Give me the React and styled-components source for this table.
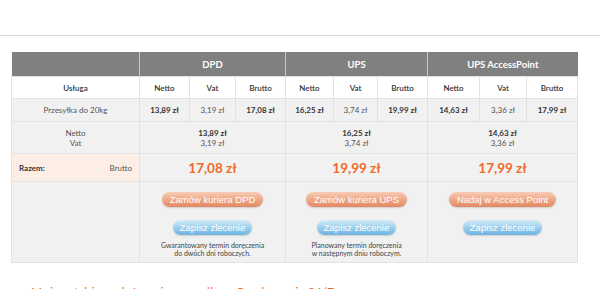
import React from "react";
import styled, { createGlobalStyle } from "styled-components";

const Global = createGlobalStyle`
  html, body { margin: 0; padding: 0; background: #fff; }
  body { font-family: Lato, "Open Sans", sans-serif; color: #333; overflow: hidden; }
`;

const Page = styled.div`
  width: 600px;
  height: 289px;
  overflow: hidden;
  padding-top: 35px;
  box-sizing: border-box;
`;

const Rule = styled.div`
  height: 1px;
  background: #d6d6d6;
  margin-bottom: 16px;
`;

const Table = styled.table`
  margin-left: 11px;
  width: 566px;
  border-collapse: collapse;
  table-layout: fixed;
  font-size: 8px;
`;

const HeadCell = styled.th`
  background: #808080;
  color: #fff;
  font-weight: 700;
  font-size: 9.5px;
  height: 24px;
  padding: 0;
  border-left: 1px solid #c8c8c8;
  &:first-child { border-left: none; }
`;

const Cell = styled.td`
  padding: 0;
  text-align: ${(p) => p.$align || "center"};
  background: ${(p) => p.$bg || "#f1f1f1"};
  border: 1px solid #e2e2e2;
  height: ${(p) => p.$h || 21}px;
  font-weight: ${(p) => (p.$bold ? 700 : 400)};
  color: ${(p) => (p.$light ? "#555" : "#333")};
  vertical-align: ${(p) => p.$valign || "middle"};
`;

const SubCell = styled(Cell)`
  background: #fff;
  font-weight: 600;
  color: #333;
`;

const Lines = styled.div`
  display: flex;
  flex-direction: column;
  align-items: center;
  line-height: 10px;
  font-size: 8px;
`;

const Strong = styled.span`
  font-weight: 700;
  color: #333;
`;

const Soft = styled.span`
  color: #555;
`;

const RazemInner = styled.div`
  display: flex;
  justify-content: space-between;
  padding: 0 7px 0 7px;
  font-size: 8px;
  color: #333;
`;

const Price = styled.span`
  color: #ee6b2d;
  font-weight: 700;
  font-size: 13.5px;
`;

const Actions = styled.div`
  display: flex;
  flex-direction: column;
  align-items: center;
  padding-top: 10px;
`;

const Pill = styled.div`
  font-family: "Liberation Sans", Arial, sans-serif;
  font-size: 9.5px;
  color: #fff;
  height: 15px;
  line-height: 15px;
  padding: 0 ${(p) => p.$pad || 9}px;
  border-radius: 8px;
  text-align: center;
  white-space: nowrap;
  box-shadow: 0 1px 2px rgba(0, 0, 0, 0.15);
  background: ${(p) =>
    p.$kind === "blue"
      ? "linear-gradient(#d4ecf9 0%, #a3d2ef 45%, #6cb3e2 100%)"
      : "linear-gradient(#f7cdb6 0%, #efab8c 45%, #e28862 100%)"};
  margin-bottom: ${(p) => p.$mb || 0}px;
`;

const Note = styled.div`
  font-size: 7px;
  line-height: 8px;
  color: #444;
  text-align: center;
  margin-top: 6px;
`;

const Footer = styled.div`
  margin: 21px 0 0 31px;
  color: #ee6b2d;
  font-size: 12px;
  white-space: nowrap;
`;

const carriers = [
  { name: "DPD", netto: "13,89 zł", vat: "3,19 zł", brutto: "17,08 zł", order: "Zamów kuriera DPD", note: ["Gwarantowany termin doręczenia", "do dwóch dni roboczych."] },
  { name: "UPS", netto: "16,25 zł", vat: "3,74 zł", brutto: "19,99 zł", order: "Zamów kuriera UPS", note: ["Planowany termin doręczenia", "w następnym dniu roboczym."] },
  { name: "UPS AccessPoint", netto: "14,63 zł", vat: "3,36 zł", brutto: "17,99 zł", order: "Nadaj w Access Point", note: null },
];

const widths = [128, 50, 46, 50, 48, 44, 50, 52, 47, 51];

export default function App() {
  return (
    <Page>
      <Global />
      <Rule />
      <Table>
        <colgroup>
          {widths.map((w, i) => (
            <col key={i} style={{ width: w }} />
          ))}
        </colgroup>
        <thead>
          <tr>
            <HeadCell />
            {carriers.map((c) => (
              <HeadCell key={c.name} colSpan={3}>{c.name}</HeadCell>
            ))}
          </tr>
        </thead>
        <tbody>
          <tr>
            <SubCell>Usługa</SubCell>
            {carriers.map((c) => (
              <React.Fragment key={c.name}>
                <SubCell>Netto</SubCell>
                <SubCell>Vat</SubCell>
                <SubCell>Brutto</SubCell>
              </React.Fragment>
            ))}
          </tr>
          <tr>
            <Cell $h={22} $light>Przesyłka do 20kg</Cell>
            {carriers.map((c) => (
              <React.Fragment key={c.name}>
                <Cell $h={22} $bold>{c.netto}</Cell>
                <Cell $h={22} $light>{c.vat}</Cell>
                <Cell $h={22} $bold>{c.brutto}</Cell>
              </React.Fragment>
            ))}
          </tr>
          <tr>
            <Cell $h={31}>
              <Lines>
                <Soft>Netto</Soft>
                <Soft>Vat</Soft>
              </Lines>
            </Cell>
            {carriers.map((c) => (
              <Cell key={c.name} colSpan={3} $h={31}>
                <Lines>
                  <Strong>{c.netto}</Strong>
                  <Soft>{c.vat}</Soft>
                </Lines>
              </Cell>
            ))}
          </tr>
          <tr>
            <Cell $h={27} $bg="#fdeee5" $align="left">
              <RazemInner>
                <Strong>Razem:</Strong>
                <Soft>Brutto</Soft>
              </RazemInner>
            </Cell>
            {carriers.map((c) => (
              <Cell key={c.name} colSpan={3} $h={27}>
                <Price>{c.brutto}</Price>
              </Cell>
            ))}
          </tr>
          <tr>
            <Cell $h={80} />
            {carriers.map((c) => (
              <Cell key={c.name} colSpan={3} $h={80} $valign="top">
                <Actions>
                  <Pill $mb={13} $pad={8}>{c.order}</Pill>
                  <Pill $kind="blue" $pad={7}>Zapisz zlecenie</Pill>
                  {c.note && (
                    <Note>
                      {c.note[0]}
                      <br />
                      {c.note[1]}
                    </Note>
                  )}
                </Actions>
              </Cell>
            ))}
          </tr>
        </tbody>
      </Table>
      <Footer>Możesz także nadać swoją przesyłkę w Paczkomacie 24/7</Footer>
    </Page>
  );
}
